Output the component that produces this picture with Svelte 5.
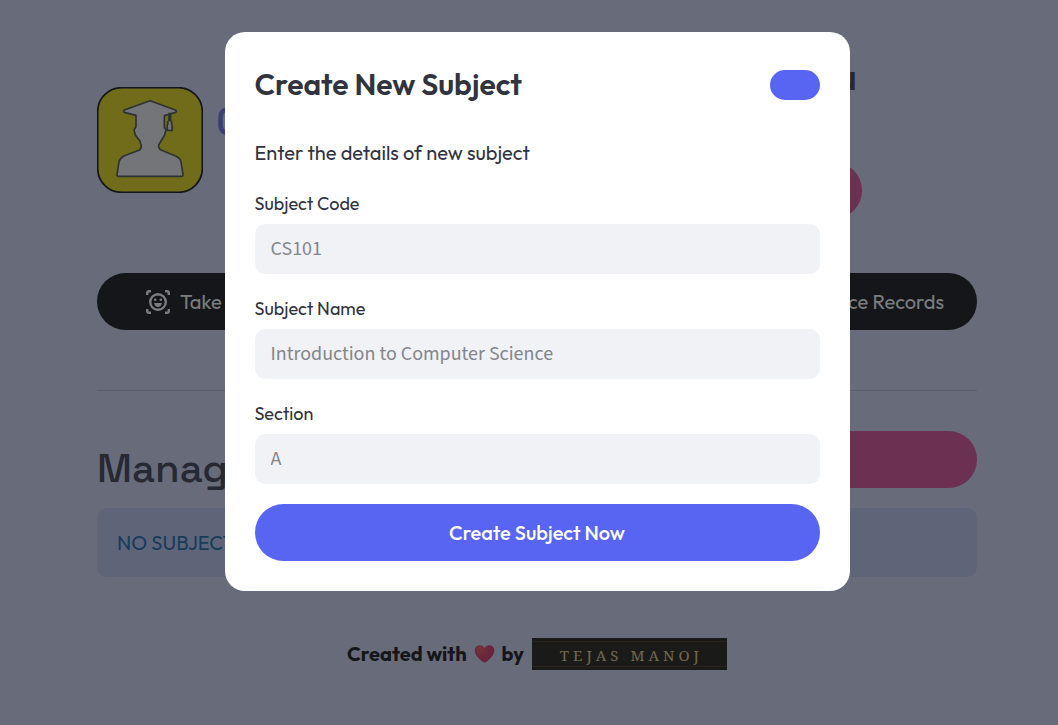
<script lang="ts">
    interface Field {
        id: string;
        label: string;
        placeholder: string;
    }

    const fields: Field[] = [
        { id: 'subject-code', label: 'Subject Code', placeholder: 'CS101' },
        { id: 'subject-name', label: 'Subject Name', placeholder: 'Introduction to Computer Science' },
        { id: 'section', label: 'Section', placeholder: 'A' }
    ];

    let isOpen = $state(true);
    let values: Record<string, string> = $state({
        'subject-code': '',
        'subject-name': '',
        section: ''
    });

    function closeModal() {
        isOpen = false;
    }

    function handleSubmit(event: SubmitEvent) {
        event.preventDefault();
        closeModal();
    }
</script>

<div class="page" inert={isOpen}>
    <header class="header">
        <div class="brand">
            <svg class="logo" viewBox="0 0 318 318" aria-hidden="true">
                <rect x="2" y="2" width="314" height="314" rx="72" fill="#e6d702" stroke="#000" stroke-width="5" />
                <g fill="#f0eef0" stroke="#404740" stroke-width="5" stroke-linejoin="round">
                    <path d="M159 41 L235 69 Q241 72 236 76 L202 86 V122 Q208 124 206 131 L203 144 L185 174 V181 Q187 187 194 190 L236 207 Q250 214 252 224 L258 263 Q259 268 253 268 H65 Q59 268 60 263 L66 224 Q69 213 82 206 L126 190 Q133 186 133 176 L129 163 L115 144 L111 128 L117 119 V85 L82 76 Q77 72 82 69 Z" />
                    <path d="M216 80 H221 V101 Q226 103 223 110 Q227 114 225 122 L226 130 H210 L211 122 Q209 114 213 110 Q210 103 216 101 Z" />
                </g>
            </svg>
            <h1>CLASS</h1>
        </div>
        <div class="account">
            <h3>Welcome, Manu</h3>
            <button class="btn pink" type="button">Logout</button>
        </div>
    </header>

    <nav class="tabs">
        <button class="btn dark" type="button">
            <svg class="face" viewBox="0 0 24 24" fill="none" stroke="currentColor" stroke-width="2.4" aria-hidden="true">
                <path d="M1.200 5V3Q1.200 1.200 3 1.200H5 M19 1.200H21Q22.800 1.200 22.800 3V5 M22.800 19V21Q22.800 22.800 21 22.800H19 M5 22.800H3Q1.200 22.800 1.200 21V19" />
                <circle cx="12" cy="12" r="7.8" />
                <circle cx="9.2" cy="9.8" r="1.3" fill="currentColor" stroke="none" />
                <circle cx="14.8" cy="9.8" r="1.3" fill="currentColor" stroke="none" />
                <path d="M8 13H16Q15 17 12 17Q9 17 8 13Z" fill="currentColor" stroke="none" />
            </svg>
            Take Attendance
        </button>
        <button class="btn dark last" type="button">Attendance Records</button>
    </nav>

    <hr />

    <section class="subjects">
        <div class="subjects-header">
            <h2>Manage Subjects</h2>
            <button class="btn pink" type="button" aria-label="Create new subject"></button>
        </div>
        <p class="notice">NO SUBJECTS FOUND</p>
    </section>

    <footer class="footer">
        <p class="credit">
            <span>Created with</span>
            <svg class="heart" viewBox="0 0 20 18" aria-hidden="true">
                <defs>
                    <radialGradient id="heart-fill" cx="0.3" cy="0.25" r="0.9">
                        <stop offset="0" stop-color="#e84a50" />
                        <stop offset="0.5" stop-color="#d62a54" />
                        <stop offset="1" stop-color="#c71a6b" />
                    </radialGradient>
                </defs>
                <path fill="url(#heart-fill)" d="M10 3C8-0.6 3-0.8 1 2.6C-1.4 7 2 11 5 14Q8.500 17.500 10 17.500Q11.500 17.500 15 14C18 11 21.400 7 19 2.600C17-0.800 12-0.600 10 3Z" />
            </svg>
            <span>by</span>
        </p>
        <span class="author">TEJAS MANOJ</span>
    </footer>
</div>

{#if isOpen}
    <div class="backdrop" role="presentation">
        <div class="modal" role="dialog" aria-modal="true" aria-labelledby="modal-title">
            <div class="modal-header">
                <h2 id="modal-title">Create New Subject</h2>
                <button class="close-button" type="button" aria-label="Close" onclick={closeModal}></button>
            </div>
            <p class="intro">Enter the details of new subject</p>
            <form onsubmit={handleSubmit}>
                {#each fields as field (field.id)}
                    <div class="field">
                        <label for={field.id}>{field.label}</label>
                        <input id={field.id} type="text" placeholder={field.placeholder} bind:value={values[field.id]} />
                    </div>
                {/each}
                <button class="btn submit" type="submit">Create Subject Now</button>
            </form>
        </div>
    </div>
{/if}

<style>
    :global(body) {
        background: #d2d4f0;
        font-family: Outfit, Lato, sans-serif;
        color: #2d2d3f;
    }

    h1,
    h2,
    h3,
    p {
        margin: 0;
    }

    .page {
        box-sizing: border-box;
        max-width: 896px;
        margin: 0 auto;
        padding-left: 16px;
    }

    .header {
        display: flex;
        justify-content: space-between;
        align-items: flex-start;
        padding: 59px 0 54px;
    }

    .brand {
        display: flex;
        gap: 13px;
        margin-top: 28px;
    }

    .logo {
        width: 106px;
        height: 106px;
    }

    .brand h1 {
        margin-top: 9px;
        font-family: 'Space Grotesk', Inter, sans-serif;
        font-size: 40px;
        font-weight: 500;
        line-height: 52px;
        color: #5865f2;
    }

    .account {
        display: flex;
        flex-direction: column;
        align-items: flex-end;
        gap: 65px;
        margin-right: 115px;
    }

    .account h3 {
        padding-right: 5px;
        font-family: 'Space Grotesk', Inter, sans-serif;
        font-size: 35px;
        font-weight: 600;
        line-height: 38px;
    }

    .btn {
        display: flex;
        align-items: center;
        justify-content: center;
        height: 57px;
        padding: 0 32px;
        border: none;
        border-radius: 29px;
        color: #fff;
        font-family: inherit;
        font-size: 20px;
        cursor: pointer;
    }

    .pink {
        background: #d9418e;
    }

    .dark {
        background: #000;
    }

    .tabs {
        display: grid;
        grid-template-columns: 1fr 1fr;
        gap: 16px;
    }

    .tabs .btn {
        justify-content: flex-start;
        gap: 10px;
        padding: 0 49px;
    }

    .tabs .last {
        justify-content: flex-end;
        padding: 0 33px;
    }

    .face {
        width: 24px;
        height: 24px;
    }

    hr {
        height: 1px;
        margin: 60px 0 40px;
        border: none;
        background: #b4b4cd;
    }

    .subjects-header {
        display: grid;
        grid-template-columns: 1fr 1fr;
        gap: 16px;
        margin-bottom: 20px;
    }

    .subjects-header h2 {
        height: 45px;
        padding-top: 12px;
        font-family: 'Space Grotesk', Inter, sans-serif;
        font-size: 40px;
        font-weight: 500;
        line-height: 52px;
    }

    .notice {
        padding: 20px;
        border-radius: 10px;
        background: #bcc6f0;
        color: #0a5ca8;
        font-size: 20px;
        line-height: 29px;
    }

    .footer {
        display: flex;
        justify-content: center;
        align-items: flex-start;
        gap: 8px;
        margin-top: 61px;
    }

    .credit {
        display: flex;
        align-items: center;
        gap: 7px;
        color: #000;
        font-size: 20px;
        font-weight: 700;
        line-height: 31px;
    }

    .heart {
        width: 21px;
        height: 18px;
    }

    .author {
        box-sizing: border-box;
        width: 195px;
        height: 32px;
        padding: 2px 0 0 4px;
        border: solid #0f0a02;
        border-width: 3px 0;
        background: #0f0a02;
        box-shadow: inset 0 1px #371e08, inset 0 -1px #371e08;
        color: #e1cf8a;
        font-family: 'Noto Serif', 'DejaVu Serif', serif;
        font-size: 15px;
        letter-spacing: 4px;
        line-height: 24px;
        text-align: center;
    }

    .backdrop {
        position: fixed;
        inset: 0;
        box-sizing: border-box;
        padding: 32px 0 32px 16px;
        overflow-y: auto;
        background: rgba(33, 37, 42, 0.6);
    }

    .modal {
        box-sizing: border-box;
        max-width: 625px;
        margin: 0 auto;
        padding: 30px;
        border-radius: 20px;
        background: #fff;
        color: #31333f;
    }

    .modal-header {
        display: flex;
        justify-content: space-between;
        align-items: center;
        min-height: 46px;
        margin-bottom: 30px;
    }

    .modal-header h2 {
        padding-bottom: 2px;
        font-size: 30px;
        font-weight: 600;
        line-height: 36px;
    }

    .close-button {
        width: 50px;
        height: 30px;
        border: none;
        border-radius: 15px;
        background: #5865f2;
        cursor: pointer;
    }

    .intro {
        margin-bottom: 24px;
        font-size: 20px;
        line-height: 30px;
    }

    .field {
        display: flex;
        flex-direction: column;
        gap: 8px;
        margin-bottom: 23px;
    }

    .field:nth-last-child(2) {
        margin-bottom: 20px;
    }

    .field label {
        font-size: 18px;
        line-height: 24px;
    }

    .field input {
        box-sizing: border-box;
        width: 100%;
        height: 50px;
        padding: 0 16px;
        border: none;
        border-radius: 10px;
        background: #f0f2f6;
        color: #31333f;
        font-family: 'Source Sans 3', 'Noto Sans CJK SC', sans-serif;
        font-size: 20px;
    }

    .field input::placeholder {
        color: #83858c;
        opacity: 1;
    }

    .submit {
        width: 100%;
        background: #5865f2;
        font-weight: 500;
    }
</style>
